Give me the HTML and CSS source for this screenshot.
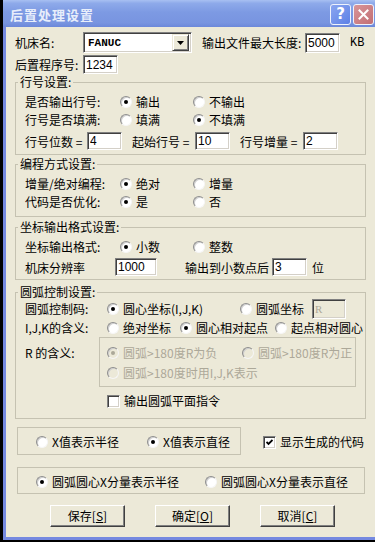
FILE: index.html
```html
<!DOCTYPE html>
<html lang="zh-CN">
  <head>
    <meta charset="UTF-8" />
    <meta name="viewport" content="width=device-width, initial-scale=1.0" />
    <title>后置处理设置</title>
    <link rel="stylesheet" href="styles.css">
  </head>
  <body>
    <div class="post-dialog">
      <div class="post-dialog__titlebar">
        <span class="post-dialog__title">后置处理设置</span>
        <span class="caption-btn caption-btn--help">?</span>
        <span class="caption-btn caption-btn--close">
          <svg width="11" height="11" viewBox="0 0 11 11">
            <path d="M1.5 1.5l8 8M9.5 1.5l-8 8" stroke="#fff" stroke-width="2" stroke-linecap="square" />
          </svg>
        </span>
      </div>

      <div class="post-dialog__body">
        <!-- Machine / file settings -->
        <div class="top-row">
          <span class="top-row__label">机床名:</span>
          <div class="combo">
            <span class="combo__value">FANUC</span>
            <span class="combo__button">
              <svg width="7" height="4" viewBox="0 0 7 4"><path d="M0 0h7L3.5 4z" fill="#000" /></svg>
            </span>
          </div>
          <span class="top-row__label top-row__label--size">输出文件最大长度:</span>
          <input class="text-field text-field--top" value="5000" />
          <span class="top-row__unit">KB</span>
        </div>
        <div class="top-row top-row--program">
          <span class="top-row__label">后置程序号:</span>
          <input class="text-field text-field--program" value="1234" />
        </div>

        <!-- Line numbers -->
        <fieldset class="group group--numbers">
          <legend class="group__legend">行号设置:</legend>
          <div class="group__body group__body--numbers">
            <div class="choice-row">
              <span>是否输出行号:</span>
              <label class="option"><span class="radio radio--checked"></span>输出</label>
              <label class="option"><span class="radio"></span>不输出</label>
            </div>
            <div class="choice-row">
              <span>行号是否填满:</span>
              <label class="option"><span class="radio"></span>填满</label>
              <label class="option"><span class="radio radio--checked"></span>不填满</label>
            </div>
            <div class="numbers-row">
              <span>行号位数 =</span>
              <input class="text-field" value="4" />
              <span class="numbers-row__label">起始行号 =</span>
              <input class="text-field" value="10" />
              <span class="numbers-row__label">行号增量 =</span>
              <input class="text-field" value="2" />
            </div>
          </div>
        </fieldset>

        <!-- Programming mode -->
        <fieldset class="group group--mode">
          <legend class="group__legend">编程方式设置:</legend>
          <div class="group__body group__body--mode">
            <div class="choice-row">
              <span>增量/绝对编程:</span>
              <label class="option"><span class="radio radio--checked"></span>绝对</label>
              <label class="option"><span class="radio"></span>增量</label>
            </div>
            <div class="choice-row">
              <span>代码是否优化:</span>
              <label class="option"><span class="radio radio--checked"></span>是</label>
              <label class="option"><span class="radio"></span>否</label>
            </div>
          </div>
        </fieldset>

        <!-- Coordinate format -->
        <fieldset class="group group--coords">
          <legend class="group__legend">坐标输出格式设置:</legend>
          <div class="group__body group__body--coords">
            <div class="choice-row">
              <span>坐标输出格式:</span>
              <label class="option"><span class="radio radio--checked"></span>小数</label>
              <label class="option"><span class="radio"></span>整数</label>
            </div>
            <div class="resolution-row">
              <span>机床分辨率</span>
              <input class="text-field" value="1000" />
              <span class="resolution-row__label">输出到小数点后</span>
              <input class="text-field" value="3" />
              <span class="resolution-row__unit">位</span>
            </div>
          </div>
        </fieldset>

        <!-- Arc control -->
        <fieldset class="group group--arc">
          <legend class="group__legend">圆弧控制设置:</legend>
          <div class="group__body group__body--arc">
            <div class="arc-row arc-row--code">
              <span>圆弧控制码:</span>
              <label class="option"><span class="radio radio--checked"></span>圆心坐标(I,J,K)</label>
              <label class="option"><span class="radio"></span>圆弧坐标<input class="text-field text-field--disabled" value="R" disabled /></label>
            </div>
            <div class="arc-row arc-row--ijk">
              <span>I,J,K的含义:</span>
              <label class="option"><span class="radio"></span>绝对坐标</label>
              <label class="option"><span class="radio radio--checked"></span>圆心相对起点</label>
              <label class="option"><span class="radio"></span>起点相对圆心</label>
            </div>
            <div class="r-row">
              <span class="r-row__label">R 的含义:</span>
              <div class="r-box">
                <div class="r-box__row">
                  <label class="option option--disabled"><span class="radio radio--disabled radio--checked"></span>圆弧&gt;180度R为负</label>
                  <label class="option option--disabled"><span class="radio radio--disabled"></span>圆弧&gt;180度R为正</label>
                </div>
                <div class="r-box__row">
                  <label class="option option--disabled"><span class="radio radio--disabled"></span>圆弧&gt;180度时用I,J,K表示</label>
                </div>
              </div>
            </div>
            <div class="plane-row">
              <label class="option"><span class="checkbox"></span>输出圆弧平面指令</label>
            </div>
          </div>
        </fieldset>

        <!-- Diameter / radius -->
        <div class="x-row">
          <div class="frame frame--x">
            <label class="option"><span class="radio"></span>X值表示半径</label>
            <label class="option"><span class="radio radio--checked"></span>X值表示直径</label>
          </div>
          <label class="option x-row__show">
            <span class="checkbox">
              <svg width="7" height="7" viewBox="0 0 7 7"><path d="M0.5 3l2 2 4-4" fill="none" stroke="#000" stroke-width="1.8" /></svg>
            </span>显示生成的代码
          </label>
        </div>

        <div class="frame frame--center">
          <label class="option"><span class="radio radio--checked"></span>圆弧圆心X分量表示半径</label>
          <label class="option"><span class="radio"></span>圆弧圆心X分量表示直径</label>
        </div>

        <div class="dialog-buttons">
          <button class="dialog-button">保存[<u>S</u>]</button>
          <button class="dialog-button">确定[<u>O</u>]</button>
          <button class="dialog-button">取消[<u>C</u>]</button>
        </div>
      </div>
    </div>
  </body>
</html>
```

FILE: styles.css
```css
/* General Styles */
* {
  box-sizing: border-box;
}

body {
  margin: 0;
  width: 375px;
  height: 542px;
  overflow: hidden;
  background-color: #000;
  font-family: "Noto Sans CJK SC", "Noto Sans", sans-serif;
  font-size: 12px;
  color: #000;
}

.post-dialog {
  margin-left: 3px;
  width: 372px;
  height: 540px;
  display: flex;
  flex-flow: column;
}

/* Title bar */
.post-dialog__titlebar {
  flex: none;
  height: 27px;
  display: flex;
  align-items: center;
  gap: 2px;
  padding: 2px 1px 0 7px;
  background: linear-gradient(#a8c0f2 0%, #8eaaea 12%, #7d9ae3 45%, #7894e0 85%, #6c88da 100%);
}

.post-dialog__title {
  flex: 1;
  font-size: 13px;
  font-weight: bold;
  letter-spacing: 1px;
  line-height: 16px;
  color: #e8eefb;
}

.caption-btn {
  width: 21px;
  height: 21px;
  display: flex;
  align-items: center;
  justify-content: center;
  border: 1px solid #eef2fc;
  border-radius: 3px;
  color: #fff;
}

.caption-btn--help {
  background: linear-gradient(135deg, #8aa6f0, #5d80e6);
  font-family: "DejaVu Sans", sans-serif;
  font-size: 15px;
  font-weight: bold;
  line-height: 19px;
}

.caption-btn--close {
  background: linear-gradient(135deg, #d99599, #c26f74);
}

/* Dialog body */
.post-dialog__body {
  flex: 1;
  background-color: #ece9d8;
  border-left: 3px solid #7589e0;
  border-bottom: 3px solid #7589e0;
  padding: 5px 9px 0 9px;
}

/* Top rows */
.top-row {
  height: 21px;
  display: flex;
  align-items: center;
}

.top-row--program {
  height: 19px;
  margin-top: 2px;
}

.top-row__label {
  width: 68px;
  line-height: 18px;
}

.top-row__label--size {
  width: 103px;
  margin-left: 10px;
}

.top-row__unit {
  margin-left: 10px;
  font-family: "Liberation Mono", monospace;
  font-size: 12px;
}

/* Inputs */
.text-field {
  width: 35px;
  height: 18px;
  padding: 0 2px;
  border: 1px solid;
  border-color: #808080 #fff #fff #808080;
  box-shadow: inset 1px 1px 0 #404040, inset -1px -1px 0 #d4d0c8;
  background-color: #fff;
  font-family: "Liberation Sans", sans-serif;
  font-size: 12px;
  color: #000;
  outline: none;
}

.text-field--top {
  height: 20px;
}

.text-field--program {
  height: 19px;
}

.text-field--disabled {
  width: 34px;
  height: 20px;
  margin-left: 4px;
  background-color: #ece9d8;
  font-family: "Liberation Serif", serif;
  font-size: 11px;
  color: #aca899;
}

.combo {
  width: 109px;
  height: 21px;
  display: flex;
  align-items: center;
  justify-content: space-between;
  padding: 2px;
  border: 1px solid;
  border-color: #808080 #fff #fff #808080;
  box-shadow: inset 1px 1px 0 #404040, inset -1px -1px 0 #d4d0c8;
  background-color: #fff;
}

.combo__value {
  padding-left: 2px;
  font-family: "Liberation Mono", monospace;
  font-size: 11px;
  font-weight: bold;
}

.combo__button {
  width: 17px;
  height: 17px;
  display: flex;
  align-items: center;
  justify-content: center;
  background-color: #ece9d8;
  border: 1px solid;
  border-color: #ece9d8 #404040 #404040 #ece9d8;
  box-shadow: inset 1px 1px 0 #fff, inset -1px -1px 0 #808080;
}

/* Group boxes */
.group {
  margin: 0;
  padding: 0;
  min-width: 0;
  border: 1px solid #c5c2b1;
}

.group__legend {
  margin-left: 2px;
  padding: 0 2px;
  line-height: 14px;
}

.group__body {
  padding-left: 9px;
}

.group--numbers {
  margin-top: 1px;
}

.group--mode {
  margin-top: 2px;
}

.group--coords {
  margin-top: 3px;
}

.group--arc {
  margin-top: 5px;
}

.group__body--numbers {
  padding-top: 4px;
  padding-bottom: 4px;
}

.group__body--mode {
  padding-top: 4px;
  padding-bottom: 5px;
}

.group__body--coords {
  padding-top: 4px;
  padding-bottom: 3px;
}

.group__body--arc {
  padding-bottom: 8px;
}

/* Radio and checkbox */
.option {
  display: flex;
  align-items: center;
  gap: 4px;
  white-space: nowrap;
  line-height: 18px;
}

.option--disabled {
  color: #aca899;
}

.radio {
  flex: none;
  width: 12px;
  height: 12px;
  display: inline-flex;
  align-items: center;
  justify-content: center;
  border-radius: 50%;
  border: 1px solid;
  border-color: #8e8e8e #f6f6f6 #f6f6f6 #8e8e8e;
  box-shadow: inset 1px 1px 0 #cfcfcf;
  background-color: #fff;
}

.radio--checked::after {
  content: "";
  width: 4px;
  height: 4px;
  border-radius: 50%;
  background-color: #000;
}

.radio--disabled {
  background-color: #ece9d8;
}

.radio--disabled.radio--checked::after {
  background-color: #aca899;
}

.checkbox {
  flex: none;
  width: 13px;
  height: 13px;
  display: inline-flex;
  align-items: center;
  justify-content: center;
  border: 1px solid;
  border-color: #808080 #fff #fff #808080;
  box-shadow: inset 1px 1px 0 #404040, inset -1px -1px 0 #d4d0c8;
  background-color: #fff;
}

/* Rows inside groups */
.choice-row {
  height: 18px;
  display: grid;
  grid-template-columns: 95px 73px 1fr;
  align-items: center;
  line-height: 18px;
}

.numbers-row {
  height: 18px;
  margin-top: 3px;
  display: grid;
  grid-template-columns: 62px 35px 73px 35px 73px 35px;
  align-items: center;
}

.numbers-row__label {
  padding-left: 10px;
}

.resolution-row {
  height: 18px;
  margin-top: 2px;
  display: grid;
  grid-template-columns: 90px 42px 115px 35px auto;
  align-items: center;
}

.resolution-row .text-field:first-of-type {
  width: 42px;
}

.resolution-row__label {
  padding-left: 28px;
}

.resolution-row__unit {
  padding-left: 5px;
}

.arc-row {
  display: grid;
  align-items: center;
  line-height: 18px;
}

.arc-row--code {
  height: 20px;
  grid-template-columns: 82px 133px auto;
}

.arc-row--ijk {
  height: 18px;
  grid-template-columns: 82px 73px 95px auto;
}

.r-row {
  display: flex;
  align-items: flex-start;
}

.r-row__label {
  width: 74px;
  margin-top: 7px;
  line-height: 18px;
}

.r-box {
  width: 257px;
  height: 50px;
  display: flex;
  flex-flow: column;
  gap: 2px;
  padding: 6px 0 0 7px;
  border: 1px solid #c5c2b1;
}

.r-box__row {
  height: 18px;
  display: grid;
  grid-template-columns: 135px auto;
  align-items: center;
}

.plane-row {
  height: 18px;
  margin-top: 5px;
  padding-left: 82px;
  display: flex;
  align-items: center;
}

/* Bottom frames */
.frame {
  margin-left: 2px;
  display: grid;
  align-items: center;
  padding: 2px 0 0 18px;
  border: 1px solid #c5c2b1;
}

.x-row {
  margin-top: 8px;
  display: flex;
  align-items: center;
}

.frame--x {
  width: 224px;
  height: 28px;
  grid-template-columns: 111px auto;
}

.x-row__show {
  margin-left: 22px;
  padding-top: 2px;
}

.frame--center {
  width: 348px;
  height: 27px;
  margin-top: 12px;
  grid-template-columns: 169px auto;
}

/* Button Styles */
.dialog-buttons {
  margin-top: 11px;
  padding-left: 35px;
  display: flex;
  gap: 30px;
}

.dialog-button {
  width: 75px;
  height: 22px;
  padding: 0;
  border: 1px solid;
  border-color: #fff #404040 #404040 #fff;
  box-shadow: inset -1px -1px 0 #808080;
  background-color: #ece9d8;
  font-family: "Noto Sans CJK SC", sans-serif;
  font-size: 12px;
  line-height: 18px;
  color: #000;
}
```
